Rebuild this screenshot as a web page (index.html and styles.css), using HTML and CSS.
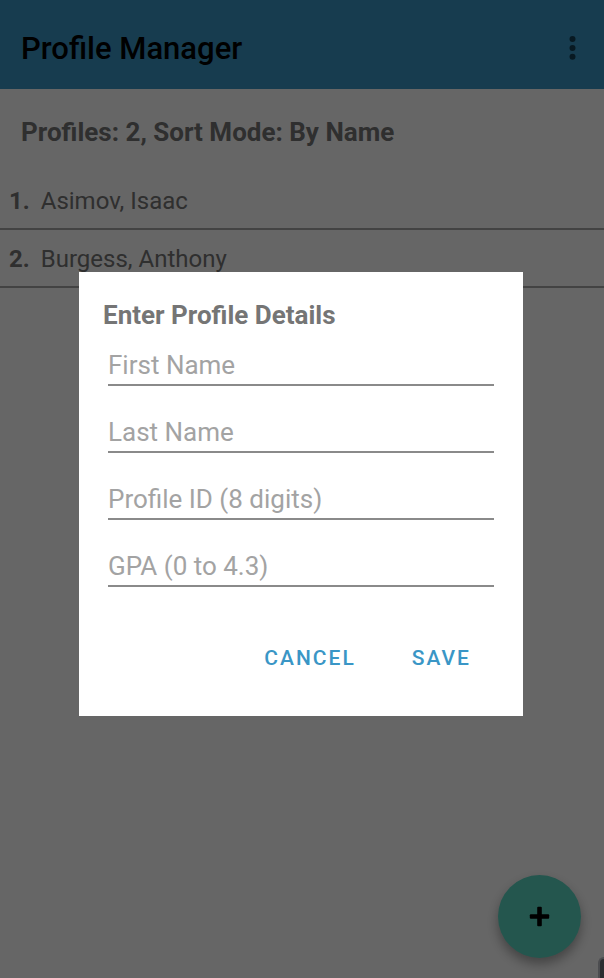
FILE: index.html
```html
<!DOCTYPE html>
<html lang="en">
<head>
<meta charset="utf-8">
<meta name="viewport" content="width=device-width, initial-scale=1">
<title>Profile Manager</title>
<link rel="stylesheet" href="styles.css">
</head>
<body>
<div class="app">
  <header class="toolbar">
    <h1 class="toolbar-title">Profile Manager</h1>
    <button class="menu-button" type="button" aria-label="More options">
      <svg width="8" height="26" viewBox="0 0 8 26" aria-hidden="true"><circle cx="4.5" cy="3" r="3"/><circle cx="4.5" cy="11.9" r="3"/><circle cx="4.5" cy="20.8" r="3"/></svg>
    </button>
  </header>
  <main>
    <h2 class="summary">Profiles: 2, Sort Mode: By Name</h2>
    <ol class="profiles">
      <li class="profile"><b>1.</b><span>Asimov, Isaac</span></li>
      <li class="profile"><b>2.</b><span>Burgess, Anthony</span></li>
    </ol>
  </main>
  <button class="fab" type="button" aria-label="Add profile">
    <svg width="21" height="21" viewBox="0 0 21 21" aria-hidden="true"><rect x="8.2" y="0.8" width="4.6" height="19.4" rx="1"/><rect x="0.8" y="8.2" width="19.4" height="4.6" rx="1"/></svg>
  </button>
</div>
<div class="scrim">
  <form class="dialog" role="dialog" aria-labelledby="dialog-title">
    <h2 class="dialog-title" id="dialog-title">Enter Profile Details</h2>
    <div class="fields">
      <input class="field" type="text" aria-label="First Name" placeholder="First Name">
      <input class="field" type="text" aria-label="Last Name" placeholder="Last Name">
      <input class="field" type="text" inputmode="numeric" aria-label="Profile ID (8 digits)" placeholder="Profile ID (8 digits)">
      <input class="field" type="text" inputmode="decimal" aria-label="GPA (0 to 4.3)" placeholder="GPA (0 to 4.3)">
    </div>
    <div class="actions">
      <button class="action" type="button">CANCEL</button>
      <button class="action" type="button">SAVE</button>
    </div>
  </form>
</div>
<div class="corner"></div>
</body>
</html>
```
FILE: styles.css
```css
* {
  box-sizing: border-box;
}

body {
  margin: 0;
  background: #fff;
  color: #757575;
  font-family: Roboto, "Liberation Sans", sans-serif;
}

h1,
h2,
ol {
  margin: 0;
  padding: 0;
}

button {
  border: 0;
  background: none;
  font-family: inherit;
}

.app {
  min-height: 100vh;
}

.toolbar {
  display: flex;
  align-items: center;
  justify-content: space-between;
  height: 89px;
  padding: 9px 24px 0 21px;
  background: #3a96c6;
  color: #000;
}

.toolbar-title {
  font-size: 31px;
  line-height: 36px;
  font-weight: 500;
}

.menu-button {
  display: flex;
  padding: 4px;
  fill: #144055;
}

.summary {
  padding: 27px 21px 24px;
  font-size: 26px;
  line-height: 32px;
  font-weight: 700;
}

.profiles {
  list-style: none;
}

.profile {
  display: flex;
  gap: 11px;
  height: 58px;
  padding: 13px 9px;
  border-bottom: 2px solid #a8a8a8;
  font-size: 24px;
  line-height: 32px;
}

.fab {
  position: fixed;
  right: 23px;
  bottom: 20px;
  display: grid;
  place-items: center;
  width: 83px;
  height: 83px;
  padding: 0;
  border-radius: 50%;
  background: #5ad7c3;
  box-shadow: 0 6px 12px rgba(0, 0, 0, 0.35);
}

.scrim {
  position: fixed;
  inset: 0;
  display: flex;
  align-items: center;
  justify-content: center;
  padding: 10px 81px 0 79px;
  background: rgba(0, 0, 0, 0.6);
}

.dialog {
  width: 100%;
  max-width: 560px;
  padding: 27px 24px 34px;
  background: #fff;
}

.dialog-title {
  font-size: 26px;
  line-height: 32px;
  font-weight: 700;
}

.fields {
  display: grid;
  gap: 23px;
  padding: 11px 5px 0;
}

.field {
  width: 100%;
  height: 44px;
  padding: 3px 0 0;
  border: 0;
  border-bottom: 2px solid #8a8a8a;
  border-radius: 0;
  outline: 0;
  background: none;
  color: #333;
  font: 26px/32px Roboto, "Liberation Sans", sans-serif;
}

.field::placeholder {
  color: #a3a3a3;
  opacity: 1;
}

.actions {
  display: flex;
  justify-content: flex-end;
  gap: 18px;
  padding: 47px 9px 0 0;
}

.action {
  height: 48px;
  padding: 0 19px;
  color: #3a96c6;
  font-size: 21px;
  font-weight: 500;
  letter-spacing: 2px;
}

.corner {
  position: fixed;
  right: 0;
  bottom: 0;
  width: 6px;
  height: 21px;
  border: solid #4c4d50;
  border-width: 2px 0 0 2px;
  border-radius: 6px 0 0 0;
  background: #2c2d31;
}
```
